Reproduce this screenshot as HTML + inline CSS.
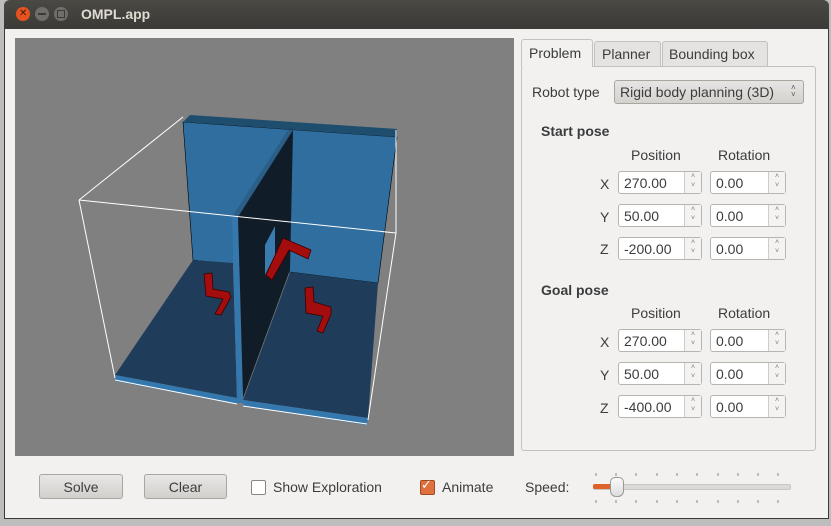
<!DOCTYPE html>
<html><head><style>
body{margin:0;width:831px;height:526px;background:#bdbdbd;position:relative;overflow:hidden;font-family:"Liberation Sans",sans-serif;font-size:14px;color:#3c3c3c}
.win{position:absolute;left:4px;top:0;width:825px;height:519px;background:#f2f1f0;border:1px solid #3a3a3a;border-top:none;border-radius:6px 6px 0 0;box-sizing:border-box}
.title{position:absolute;left:4px;top:0;width:825px;height:29px;background:linear-gradient(#4a4944,#3b3a36);border-radius:6px 6px 0 0}
.t{position:absolute;color:#dfdbd2;font-weight:bold;font-size:14px;left:81px;top:6px}
.cb{position:absolute;top:7px;width:14px;height:14px;border-radius:50%}
.a{position:absolute;white-space:nowrap}
.spin{position:absolute;height:23px;background:#fff;border:1px solid #b8b5b0;border-radius:3px;box-sizing:border-box}
.spin span{position:absolute;left:5px;top:3px}
.spin i{position:absolute;right:0;top:0;width:16px;height:21px;border-left:1px solid #ccc;background:#f4f3f2;font-style:normal;font-size:7px;color:#777;text-align:center;line-height:9px}
.btn{position:absolute;height:25px;border:1px solid #a9a6a0;border-radius:3px;background:linear-gradient(#e8e7e5,#d2d0cc);text-align:center;line-height:24px;box-sizing:border-box}
</style></head><body>
<div class="win"></div>
<div class="title"></div>
<div class="cb" style="left:16px;background:#e6531f"></div>
<div class="a" style="left:19px;top:7px;color:#3a1a0a;font-size:10px;line-height:14px">✕</div>
<div class="cb" style="left:35px;background:#6f6e6a"></div>
<div style="position:absolute;left:38px;top:13px;width:8px;height:2px;background:#3a3a38"></div>
<div class="cb" style="left:54px;background:#6f6e6a"></div>
<div style="position:absolute;left:57px;top:10px;width:6px;height:6px;border:1px solid #3a3a38"></div>
<div class="t">OMPL.app</div>

<svg style="position:absolute;left:15px;top:38px" width="499" height="418" viewBox="15 38 499 418">
<rect x="15" y="38" width="499" height="418" fill="#808080"/>
<polygon points="183,122 397,137 378,283 193,260" fill="#2f6e9e" stroke="#000" stroke-width=".6"/>
<polygon points="183,122 190,115 397,129 397,137" fill="#1f4d6e"/>
<polygon points="193,260 233,263 237,398 115,375" fill="#1f3d5a"/>
<polygon points="290,272 378,283 368,418 243,400" fill="#1f3d5a"/>
<polygon points="115,375 237,398 237,404 115,381" fill="#3578ad"/>
<polygon points="243,400 368,418 367,425 243,406" fill="#3578ad"/>
<polygon points="232,217 288,130 293,130 238,217" fill="#2b5f88"/>
<polygon points="232,217 238,217 243,403 237,403" fill="#3578ad"/>
<polygon points="238,217 293,130 290,270 243,398" fill="#101c28"/>
<polygon points="265,245 275,226 275,255 265,275" fill="#3a7cb0"/>
<g fill="#a30d0d" stroke="#3a0000" stroke-width=".8">
<polygon points="204,274 212,273 213,289 229,292 231,297 221,315 215,314 223,299 206,296"/>
<polygon points="283,238 311,250 308,259 289,250 272,280 266,275"/>
<polygon points="305,288 313,287 314,302 331,307 331,314 323,333 317,331 323,316 306,313"/>
</g>
<g stroke="#fff" stroke-width="1" fill="none">
<line x1="183" y1="117" x2="79" y2="200"/>
<line x1="79" y1="200" x2="396" y2="233"/>
<line x1="79" y1="200" x2="115" y2="378"/>
<line x1="396" y1="130" x2="396" y2="233"/>
<line x1="396" y1="233" x2="368" y2="420"/>
<line x1="115" y1="380" x2="237" y2="404"/>
<line x1="243" y1="406" x2="367" y2="424"/>
</g>
</svg>

<div style="position:absolute;left:521px;top:66px;width:295px;height:385px;border:1px solid #c4c1bc;border-radius:3px;background:#f2f1f0;box-sizing:border-box"></div>
<div style="position:absolute;left:521px;top:39px;width:72px;height:28px;border:1px solid #c4c1bc;border-bottom:none;border-radius:3px 3px 0 0;background:#f2f1f0;box-sizing:border-box"></div>
<div style="position:absolute;left:594px;top:41px;width:67px;height:25px;border:1px solid #c4c1bc;border-bottom:none;border-radius:3px 3px 0 0;background:#e4e3e1;box-sizing:border-box"></div>
<div style="position:absolute;left:662px;top:41px;width:106px;height:25px;border:1px solid #c4c1bc;border-bottom:none;border-radius:3px 3px 0 0;background:#e4e3e1;box-sizing:border-box"></div>
<div class="a" style="left:529px;top:45px">Problem</div>
<div class="a" style="left:602px;top:46px">Planner</div>
<div class="a" style="left:669px;top:46px">Bounding box</div>

<div class="a" style="left:532px;top:84px">Robot type</div>
<div style="position:absolute;left:614px;top:80px;width:190px;height:24px;border:1px solid #a9a6a0;border-radius:3px;background:linear-gradient(#e6e5e3,#d4d2ce);box-sizing:border-box"></div>
<div class="a" style="left:620px;top:84px">Rigid body planning (3D)</div>
<div class="a" style="left:791px;top:84px;font-size:8px;line-height:7px;color:#555">˄<br>˅</div>

<div class="a" style="left:541px;top:123px;font-weight:bold">Start pose</div>
<div class="a" style="left:631px;top:147px">Position</div>
<div class="a" style="left:718px;top:147px">Rotation</div>
<div class="a" style="left:600px;top:176px">X</div>
<div class="a" style="left:600px;top:209px">Y</div>
<div class="a" style="left:600px;top:241px">Z</div>
<div class="spin" style="left:618px;top:171px;width:84px"><span>270.00</span><i>˄<br>˅</i></div>
<div class="spin" style="left:710px;top:171px;width:76px"><span>0.00</span><i>˄<br>˅</i></div>
<div class="spin" style="left:618px;top:204px;width:84px"><span>50.00</span><i>˄<br>˅</i></div>
<div class="spin" style="left:710px;top:204px;width:76px"><span>0.00</span><i>˄<br>˅</i></div>
<div class="spin" style="left:618px;top:237px;width:84px"><span>-200.00</span><i>˄<br>˅</i></div>
<div class="spin" style="left:710px;top:237px;width:76px"><span>0.00</span><i>˄<br>˅</i></div>

<div class="a" style="left:541px;top:282px;font-weight:bold">Goal pose</div>
<div class="a" style="left:631px;top:305px">Position</div>
<div class="a" style="left:718px;top:305px">Rotation</div>
<div class="a" style="left:600px;top:334px">X</div>
<div class="a" style="left:600px;top:367px">Y</div>
<div class="a" style="left:600px;top:400px">Z</div>
<div class="spin" style="left:618px;top:329px;width:84px"><span>270.00</span><i>˄<br>˅</i></div>
<div class="spin" style="left:710px;top:329px;width:76px"><span>0.00</span><i>˄<br>˅</i></div>
<div class="spin" style="left:618px;top:362px;width:84px"><span>50.00</span><i>˄<br>˅</i></div>
<div class="spin" style="left:710px;top:362px;width:76px"><span>0.00</span><i>˄<br>˅</i></div>
<div class="spin" style="left:618px;top:395px;width:84px"><span>-400.00</span><i>˄<br>˅</i></div>
<div class="spin" style="left:710px;top:395px;width:76px"><span>0.00</span><i>˄<br>˅</i></div>

<div class="btn" style="left:39px;top:474px;width:84px">Solve</div>
<div class="btn" style="left:144px;top:474px;width:83px">Clear</div>
<div style="position:absolute;left:251px;top:480px;width:13px;height:13px;border:1px solid #8a8780;border-radius:2px;background:#fff"></div>
<div class="a" style="left:273px;top:479px">Show Exploration</div>
<div style="position:absolute;left:420px;top:480px;width:13px;height:13px;border:1px solid #a04a20;border-radius:2px;background:#e0703e"></div>
<div class="a" style="left:421px;top:477px;color:#fff;font-size:13px">✓</div>
<div class="a" style="left:442px;top:479px">Animate</div>
<div class="a" style="left:525px;top:479px">Speed:</div>
<div style="position:absolute;left:593px;top:484px;width:196px;height:4px;background:#dcdad6;border:1px solid #c8c6c2;border-radius:2px"></div>
<div style="position:absolute;left:593px;top:484px;width:22px;height:5px;background:#e0602a;border-radius:2px"></div>
<div style="position:absolute;left:610px;top:477px;width:12px;height:18px;background:linear-gradient(#fafafa,#ddd);border:1px solid #999;border-radius:5px 5px 6px 6px"></div>
<svg style="position:absolute;left:590px;top:470px" width="205" height="40">
<g stroke="#888" stroke-width="1">
<path d="M6 3v3M26 3v3M46 3v3M67 3v3M87 3v3M107 3v3M128 3v3M148 3v3M168 3v3M188 3v3M6 30v3M26 30v3M46 30v3M67 30v3M87 30v3M107 30v3M128 30v3M148 30v3M168 30v3M188 30v3"/>
</g></svg>
</body></html>
